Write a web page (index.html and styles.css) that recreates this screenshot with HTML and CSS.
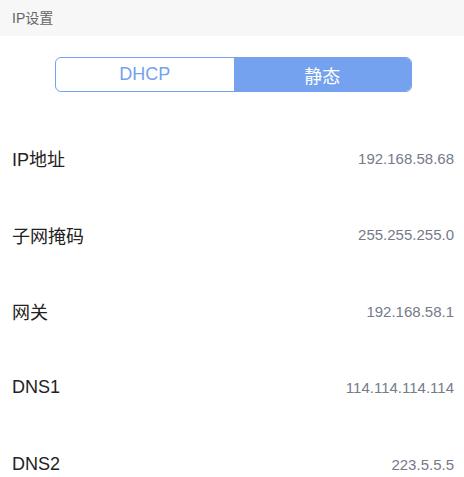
FILE: index.html
```html
<!DOCTYPE html>
<html lang="zh-CN">
<head>
    <meta charset="UTF-8">
    <meta name="viewport" content="width=device-width, initial-scale=1.0">
    <title>IP设置</title>
    <link rel="stylesheet" href="styles.css">
</head>
<body>

    <div class="section-title">IP设置</div>

    <div class="mode-switch">
        <div class="segment">DHCP</div>
        <div class="segment active">静态</div>
    </div>

    <ul class="setting-list">
        <li class="setting-row">
            <span class="setting-label">IP地址</span>
            <span class="setting-value">192.168.58.68</span>
        </li>
        <li class="setting-row">
            <span class="setting-label">子网掩码</span>
            <span class="setting-value">255.255.255.0</span>
        </li>
        <li class="setting-row">
            <span class="setting-label">网关</span>
            <span class="setting-value">192.168.58.1</span>
        </li>
        <li class="setting-row">
            <span class="setting-label">DNS1</span>
            <span class="setting-value">114.114.114.114</span>
        </li>
        <li class="setting-row">
            <span class="setting-label">DNS2</span>
            <span class="setting-value">223.5.5.5</span>
        </li>
    </ul>

</body>
</html>
```

FILE: styles.css
```css
html, body {
    height: 100%;
}
body {
    margin: 0;
    overflow: hidden;
    background-color: #fff;
    font-family: "Liberation Sans", "Noto Sans CJK SC", sans-serif;
    color: #222;
}
.section-title {
    height: 36px;
    line-height: 36px;
    padding-left: 12px;
    background-color: #f7f7f7;
    font-size: 14px;
    color: #666;
}
.mode-switch {
    display: flex;
    width: 357px;
    height: 35px;
    margin: 21px 0 0 55px;
    border: 1px solid #74a2ef;
    border-radius: 6px;
    box-sizing: border-box;
    overflow: hidden;
}
.segment {
    flex: 1;
    display: flex;
    align-items: center;
    justify-content: center;
    font-size: 18px;
    color: #74a2ef;
}
.segment.active {
    background-color: #74a2ef;
    color: #fff;
}
.setting-list {
    list-style: none;
    margin: 0;
    padding: 0;
    margin-top: 28px;
}
.setting-row {
    display: flex;
    align-items: center;
    justify-content: space-between;
    height: 76.5px;
    padding: 0 10px 0 12px;
}
.setting-label {
    font-size: 18px;
    color: #222;
}
.setting-value {
    font-size: 15px;
    color: #767a8a;
}
```
